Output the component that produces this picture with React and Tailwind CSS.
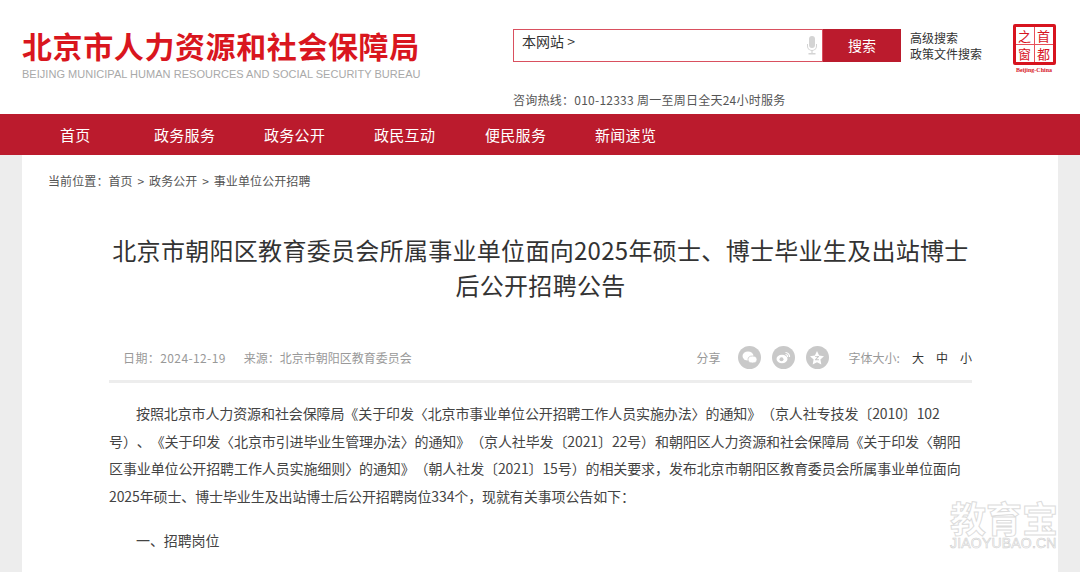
const cjk = { fontFamily: '"Noto Sans CJK SC","Liberation Sans",sans-serif' };

function Mic() {
  return (
    <svg width="12" height="20" viewBox="0 0 12 20" fill="#d4d4d4">
      <rect x="3" y="0" width="6" height="12" rx="3" />
      <path d="M1 8v2a5 5 0 0 0 10 0V8h-1v2a4 4 0 0 1-8 0V8z" />
      <rect x="5.4" y="14" width="1.2" height="3" />
      <rect x="2.5" y="17" width="7" height="1.5" />
    </svg>
  );
}

function Seal() {
  return (
    <div className="flex flex-col items-center w-[48px]">
      <div className="w-[43px] h-[41px] border-[3px] border-[#d7141f] rounded-[2px] grid grid-cols-2 grid-rows-2 gap-[1px] bg-[#e8505a] text-[#d7141f] text-[13px] leading-none">
        <span className="bg-white flex items-center justify-center">之</span>
        <span className="bg-white flex items-center justify-center">首</span>
        <span className="bg-white flex items-center justify-center">窗</span>
        <span className="bg-white flex items-center justify-center">都</span>
      </div>
      <div className="text-[6px] leading-[8px] mt-[1px] font-bold text-[#d7141f] whitespace-nowrap" style={{ fontFamily: '"Liberation Serif",serif' }}>Beijing-China</div>
    </div>
  );
}

function Share({ children }) {
  return <span className="w-[23px] h-[23px] rounded-full bg-[#c9c9c9] flex items-center justify-center">{children}</span>;
}

export default function App() {
  const nav = [
    ['首页', 'w-[94px]'],
    ['政务服务', 'w-[110px]'],
    ['政务公开', 'w-[110px]'],
    ['政民互动', 'w-[111px]'],
    ['便民服务', 'w-[110px]'],
    ['新闻速览', 'w-[110px]'],
  ];
  return (
    <div className="w-[1080px] h-[572px] overflow-hidden bg-[#ededed] relative" style={cjk}>
      <header className="h-[114px] bg-white flex items-start">
        <div className="ml-[22px] mt-[28px] w-[420px]">
          <div className="text-[30px] leading-[34px] font-bold text-[#d9161e] tracking-[0.6px] whitespace-nowrap">北京市人力资源和社会保障局</div>
          <div className="text-[11px] leading-[14px] mt-[5px] text-[#a9a9a9] tracking-[0.03px] whitespace-nowrap" style={{ fontFamily: '"Liberation Sans",sans-serif' }}>BEIJING MUNICIPAL HUMAN RESOURCES AND SOCIAL SECURITY BUREAU</div>
        </div>
        <div className="ml-[71px] w-[560px] mt-[29px]">
          <div className="flex items-start">
            <div className="w-[388px]">
              <div className="flex">
                <div className="w-[311px] h-[33px] border border-[#d9505f] flex items-start justify-between pl-[8px] pr-[3px] text-[14px] leading-[22px] text-[#333] bg-white">
                  <span>本网站 &gt;</span>
                  <span className="mr-[1px] mt-[6px]"><Mic /></span>
                </div>
                <div className="w-[78px] h-[33px] bg-[#bb1b2d] text-white text-[14px] flex items-center justify-center">搜索</div>
              </div>
              <div className="mt-[29px] text-[12px] leading-[18px] text-[#555] tracking-[0.25px] whitespace-nowrap">咨询热线：010-12333 周一至周日全天24小时服务</div>
            </div>
            <div className="ml-[9px] text-[12px] leading-[16px] text-[#333] w-[80px] whitespace-nowrap pt-[1px]">
              <div>高级搜索</div>
              <div>政策文件搜索</div>
            </div>
            <div className="ml-[20px] mt-[-5px]"><Seal /></div>
          </div>
        </div>
      </header>

      <nav className="h-[41px] bg-[#bb1b2d] flex pl-[29px] text-white text-[15px] leading-[41px] tracking-[0.3px]">
        {nav.map(([t, c]) => <span key={t} className={c + ' pl-[31px]'}>{t}</span>)}
      </nav>

      <main className="mx-[22px] bg-white h-[417px] overflow-hidden pl-[87px] pr-[86px] pt-[17px]">
        <div className="-ml-[61px] text-[12px] leading-[18px] text-[#555] tracking-[0.1px] [word-spacing:2px] whitespace-nowrap">当前位置：首页 &gt; 政务公开 &gt; 事业单位公开招聘</div>

        <h1 className="mt-[42px] text-center text-[24px] font-normal leading-[35px] text-[#333] tracking-[0.3px]">
          <div className="whitespace-nowrap">北京市朝阳区教育委员会所属事业单位面向2025年硕士、博士毕业生及出站博士</div>
          <div>后公开招聘公告</div>
        </h1>

        <div className="mt-[45px] h-[36px] border-b-[3px] border-[#ededed] flex items-start pl-[14px] text-[12px] leading-[18px] text-[#999] whitespace-nowrap">
          <span className="mt-[2px] tracking-[0.4px]">日期：2024-12-19</span>
          <span className="ml-[18px] mt-[2px]">来源：北京市朝阳区教育委员会</span>
          <span className="ml-auto mt-[2px]">分享</span>
          <span className="ml-[17px] flex gap-[11px] mt-[-1px]">
            <Share>
              <svg width="15" height="13" viewBox="0 0 15 13" fill="#fff"><ellipse cx="6" cy="5" rx="5.5" ry="4.5" /><ellipse cx="10.5" cy="8.5" rx="4.5" ry="3.5" stroke="#c9c9c9" strokeWidth="0.8" /></svg>
            </Share>
            <Share>
              <svg width="15" height="13" viewBox="0 0 15 13" fill="none"><ellipse cx="6" cy="8" rx="5.5" ry="4.2" fill="#fff" /><circle cx="5.5" cy="8.3" r="2" fill="#c9c9c9" /><path d="M9.5 1.5a4 4 0 0 1 4 4.5M9.5 3.5a2 2 0 0 1 2 2.5" stroke="#fff" strokeWidth="1.2" /></svg>
            </Share>
            <Share>
              <svg width="16" height="16" viewBox="0 0 24 24" fill="#fff"><path d="M12 1.5l3.2 6.9 7.3.9-5.4 5.1 1.4 7.4L12 18.2l-6.5 3.6 1.4-7.4L1.5 9.3l7.3-.9z" /><path d="M9 9h6v1l-3.6 4H15v1.2H9v-1l3.6-4H9z" fill="#c9c9c9" /></svg>
            </Share>
          </span>
          <span className="ml-[20px] mt-[2px]">字体大小:</span>
          <span className="ml-[12px] mt-[2px] text-[#333] flex gap-[12px]"><span>大</span><span>中</span><span>小</span></span>
        </div>

        <article className="mt-[17px] text-[14px] leading-[27.6px] text-[#444] tracking-[-0.11px] whitespace-nowrap [text-spacing-trim:space-all]">
          <p className="pl-[27px]">按照北京市人力资源和社会保障局《关于印发〈北京市事业单位公开招聘工作人员实施办法〉的通知》（京人社专技发〔2010〕102</p>
          <p>号）、《关于印发〈北京市引进毕业生管理办法〉的通知》（京人社毕发〔2021〕22号）和朝阳区人力资源和社会保障局《关于印发〈朝阳</p>
          <p>区事业单位公开招聘工作人员实施细则〉的通知》（朝人社发〔2021〕15号）的相关要求，发布北京市朝阳区教育委员会所属事业单位面向</p>
          <p>2025年硕士、博士毕业生及出站博士后公开招聘岗位334个，现就有关事项公告如下：</p>
          <p className="pl-[27px] mt-[17px]">一、招聘岗位</p>
        </article>
      </main>

      <div className="absolute left-[950px] top-[499px] w-[110px] text-white select-none" style={{ WebkitTextStroke: '1px #dcdcdc' }}>
        <div className="text-[36px] leading-[36px] font-bold whitespace-nowrap">教育宝</div>
        <div className="text-[14px] leading-[16px] tracking-[0.2px] whitespace-nowrap" style={{ fontFamily: '"Liberation Sans",sans-serif', WebkitTextStroke: '0.6px #cfcfcf' }}>JIAOYUBAO.CN</div>
      </div>
    </div>
  );
}
